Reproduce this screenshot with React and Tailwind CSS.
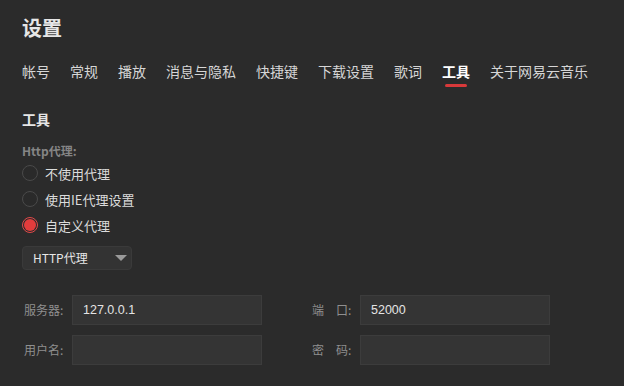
import React from "react";

const font = { fontFamily: '"Noto Sans CJK SC", "Liberation Sans", sans-serif' };

const tabs = ["帐号", "常规", "播放", "消息与隐私", "快捷键", "下载设置", "歌词", "工具", "关于网易云音乐"];

function Radio({ checked, label }) {
  return (
    <div className="flex items-center h-[26px]">
      {checked ? (
        <div className="w-[16px] h-[16px] rounded-full border border-[#e04a4a] flex items-center justify-center">
          <div className="w-[12px] h-[12px] rounded-full bg-[#e23c3c]" />
        </div>
      ) : (
        <div className="w-[16px] h-[16px] rounded-full border border-[#4a4a4a] bg-[#2a2a2a]" />
      )}
      <span className="ml-[7px] text-[13px] text-[#dcdcdc] leading-none">{label}</span>
    </div>
  );
}

function Field({ label, value, labelClass }) {
  return (
    <div className="flex items-center">
      <span className={"text-[12px] text-[#8f8f8f] leading-none " + labelClass}>{label}</span>
      <div className="w-[190px] h-[30px] bg-[#343434] border border-[#3c3c3c] flex items-center px-[10px] text-[12.5px] text-[#e4e4e4]" style={{ fontFamily: '"Liberation Sans", "Noto Sans CJK SC", sans-serif' }}>
        {value}
      </div>
    </div>
  );
}

export default function App() {
  return (
    <div className="w-[624px] h-[386px] bg-[#2b2b2b] overflow-hidden px-[22px] pt-[14px]" style={font}>
      <div className="text-[20px] font-bold text-[#e6e6e6] leading-[28px]">设置</div>
      <div className="flex gap-[20px] mt-[19px]">
        {tabs.map((t) => (
          <div key={t} className="flex flex-col items-center">
            <span className={"text-[14px] leading-[20px] " + (t === "工具" ? "text-white font-bold" : "text-[#d6d6d6]")}>{t}</span>
            <div className={"mt-[3px] h-[3px] w-[22px] rounded-full " + (t === "工具" ? "bg-[#d8393a]" : "bg-transparent")} />
          </div>
        ))}
      </div>
      <div className="mt-[22px] text-[14px] font-bold text-[#e6e6e6] leading-[20px]">工具</div>
      <div className="mt-[14px] text-[12px] font-bold text-[#858585] leading-[16px]">Http代理:</div>
      <div className="mt-[1px] flex flex-col">
        <Radio label="不使用代理" />
        <Radio label="使用IE代理设置" />
        <Radio checked label="自定义代理" />
      </div>
      <div className="mt-[8px] w-[110px] h-[24px] rounded-[4px] bg-[#333333] border border-[#3a3a3a] flex items-center justify-between pl-[10px] pr-[4px]">
        <span className="text-[12px] text-[#e8e8e8]">HTTP代理</span>
        <svg width="12" height="7" viewBox="0 0 12 7"><path d="M0 0 L12 0 L6 6 Z" fill="#9a9a9a" /></svg>
      </div>
      <div className="mt-[25px] flex flex-col gap-[10px] pl-[2px]">
        <div className="flex">
          <Field label="服务器:" value="127.0.0.1" labelClass="w-[48px]" />
          <div className="ml-[50px]">
            <Field label="端　口:" value="52000" labelClass="w-[48px]" />
          </div>
        </div>
        <div className="flex">
          <Field label="用户名:" value="" labelClass="w-[48px]" />
          <div className="ml-[50px]">
            <Field label="密　码:" value="" labelClass="w-[48px]" />
          </div>
        </div>
      </div>
    </div>
  );
}
